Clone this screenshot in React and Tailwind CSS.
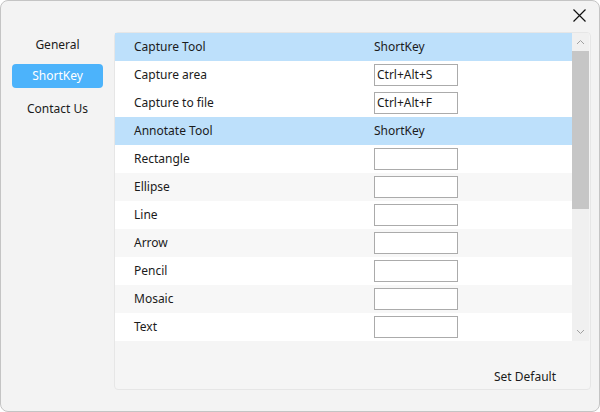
import React from "react";

const rows1 = [
  ["Capture area", "Ctrl+Alt+S"],
  ["Capture to file", "Ctrl+Alt+F"],
];
const rows2 = ["Rectangle", "Ellipse", "Line", "Arrow", "Pencil", "Mosaic", "Text"];

function Header({ a }) {
  return (
    <div className="flex h-[28px] items-center bg-[#bde0fb]">
      <div className="w-[259px] pl-[19px]">{a}</div>
      <div>ShortKey</div>
    </div>
  );
}

function Row({ label, value, alt }) {
  return (
    <div className={`flex h-[28px] items-center ${alt ? "bg-[#f7f7f7]" : "bg-white"}`}>
      <div className="w-[259px] pl-[19px]">{label}</div>
      <div className="flex h-[22px] w-[84px] items-center border border-[#ababab] bg-white px-[2px]">{value}</div>
    </div>
  );
}

export default function App() {
  return (
    <div
      className="relative h-[412px] w-[600px] overflow-hidden rounded-[8px] border border-[#c4c4c4] bg-[#f3f3f3] text-[12px] text-[#1b1b1b]"
      style={{ fontFamily: '"Noto Sans", "Open Sans", sans-serif' }}
    >
      <div className="absolute right-[12px] top-[7px]">
        <svg width="15" height="15" viewBox="0 0 15 15">
          <path d="M1.5 1.5 L13.5 13.5 M13.5 1.5 L1.5 13.5" stroke="#111" strokeWidth="1.2" />
        </svg>
      </div>
      <div className="flex pt-[31px]">
        <div className="flex w-[113px] flex-col pl-[11px] pr-[11px]">
          <div className="flex h-[26px] items-center justify-center">General</div>
          <div className="mt-[6px] flex h-[24px] items-center justify-center rounded-[4px] bg-[#4cb3fb] text-white">ShortKey</div>
          <div className="mt-[8px] flex h-[26px] items-center justify-center">Contact Us</div>
        </div>
        <div className="flex h-[358px] w-[477px] flex-col rounded-[4px] border border-[#e6e6e6] bg-[#f5f5f5]">
          <div className="flex h-[308px]">
            <div className="flex w-[457px] flex-col">
              <Header a="Capture Tool" />
              {rows1.map(([l, v]) => (
                <Row key={l} label={l} value={v} />
              ))}
              <Header a="Annotate Tool" />
              {rows2.map((l, i) => (
                <Row key={l} label={l} value="" alt={i % 2 === 1} />
              ))}
            </div>
            <div className="flex w-[17px] flex-col bg-[#f0f0f0]">
              <div className="flex h-[18px] items-center justify-center">
                <svg width="9" height="6" viewBox="0 0 9 6">
                  <path d="M1 5 L4.5 1.5 L8 5" stroke="#a0a0a0" fill="none" strokeWidth="1" />
                </svg>
              </div>
              <div className="h-[158px] bg-[#c6c6c6]" />
              <div className="flex-1" />
              <div className="flex h-[18px] items-center justify-center">
                <svg width="9" height="6" viewBox="0 0 9 6">
                  <path d="M1 1 L4.5 4.5 L8 1" stroke="#a0a0a0" fill="none" strokeWidth="1" />
                </svg>
              </div>
            </div>
          </div>
          <div className="flex flex-1 items-center justify-end pr-[34px] pt-[24px]">Set Default</div>
        </div>
      </div>
    </div>
  );
}
